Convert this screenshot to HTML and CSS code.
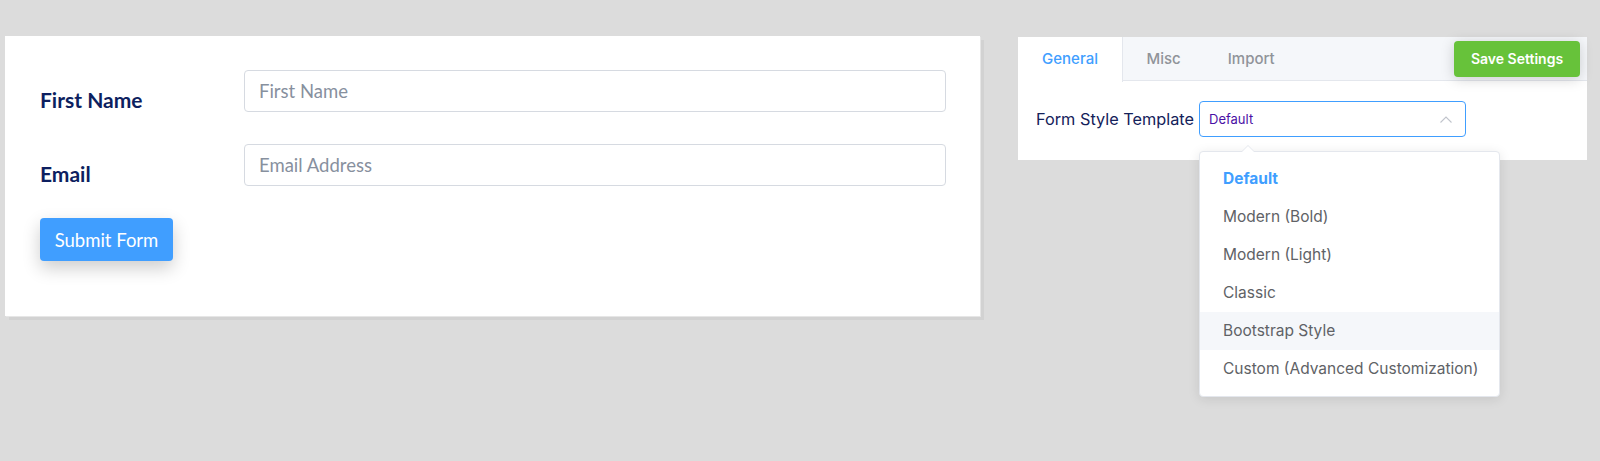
FILE: index.html
```html
<!DOCTYPE html>
<html lang="en">
<head>
<meta charset="utf-8">
<title>Form Settings</title>
<link rel="stylesheet" href="styles.css">
</head>
<body>
<div class="page">
  <section class="form-card">
    <div class="form-row">
      <label class="field-label">First Name</label>
      <input class="field-input" type="text" placeholder="First Name">
    </div>
    <div class="form-row">
      <label class="field-label">Email</label>
      <input class="field-input" type="text" placeholder="Email Address">
    </div>
    <button class="submit-btn" type="button">Submit Form</button>
  </section>

  <section class="settings">
    <div class="tabs">
      <div class="tab tab-active">General</div>
      <div class="tab">Misc</div>
      <div class="tab">Import</div>
      <button class="save-btn" type="button">Save Settings</button>
    </div>
    <div class="settings-body">
      <span class="setting-label">Form Style Template</span>
      <div class="select-wrap">
        <div class="select">
          <span class="select-value">Default</span>
          <svg class="chevron" width="12" height="7" viewBox="0 0 12 7"><path d="M0.5 6.5 L6 1 L11.5 6.5" fill="none" stroke="#c0c4cc" stroke-width="1.1"/></svg>
        </div>
        <ul class="dropdown">
          <li class="option option-selected">Default</li>
          <li class="option">Modern (Bold)</li>
          <li class="option">Modern (Light)</li>
          <li class="option">Classic</li>
          <li class="option option-hover">Bootstrap Style</li>
          <li class="option">Custom (Advanced Customization)</li>
        </ul>
      </div>
    </div>
  </section>
</div>
</body>
</html>
```

FILE: styles.css
```css
* { box-sizing: border-box; }

html, body {
  height: 100%;
}

body {
  margin: 0;
  min-height: 461px;
  background: #dcdcdc;
  font-family: "Inter", "Liberation Sans", sans-serif;
}

.page {
  display: flex;
  align-items: flex-start;
  min-height: 461px;
  padding: 36px 0 0 5px;
  gap: 38px;
}

/* ---------- left form card ---------- */
.form-card {
  width: 975px;
  height: 280px;
  background: #fff;
  box-shadow: 1px 1px 0 #e6e6e6, 4px 4px 0 #d2d2d2;
  padding: 34px 34px 0 35px;
  font-family: "Lato", "Open Sans", sans-serif;
}

.form-row {
  display: grid;
  grid-template-columns: 204px 1fr;
  align-items: start;
  margin-bottom: 31px;
}

.field-label {
  margin-top: 17px;
  font-size: 21px;
  line-height: 26px;
  font-weight: 700;
  color: #0d1f60;
}

.field-input {
  height: 42px;
  border: 1px solid #d6dae1;
  border-radius: 4px;
  padding: 0 14px;
  font-family: inherit;
  font-size: 18.5px;
  color: #333;
  outline: none;
}
.field-input::placeholder { color: #87909e; }

.submit-btn {
  width: 133px;
  height: 43px;
  border: 0;
  border-radius: 4px;
  background: #409eff;
  color: #fff;
  font-family: inherit;
  font-size: 18.5px;
  box-shadow: 0 7px 18px rgba(0, 0, 0, 0.2);
}

/* ---------- right settings panel ---------- */
.settings {
  width: 569px;
  margin-top: 1px;
  background: #fff;
}

.tabs {
  display: flex;
  align-items: center;
  height: 44px;
  background: #f5f7fa;
  border-bottom: 1px solid #e4e7ed;
  padding-right: 7px;
}

.tab {
  height: 44px;
  line-height: 44px;
  padding: 0 23.5px;
  font-size: 15px;
  font-weight: 500;
  color: #909399;
}

.tab-active {
  width: 105px;
  text-align: center;
  padding: 0;
  background: #fff;
  color: #409eff;
  border-right: 1px solid #e4e7ed;
  height: 45px;
  margin-bottom: -1px;
  align-self: flex-start;
}

.save-btn {
  margin-left: auto;
  width: 126px;
  height: 36px;
  border: 0;
  border-radius: 4px;
  background: #67c23a;
  color: #fff;
  font-family: inherit;
  font-size: 14px;
  font-weight: 600;
  box-shadow: 0 2px 14px rgba(0, 0, 0, 0.18);
}

.settings-body {
  display: flex;
  align-items: center;
  gap: 5px;
  padding: 20px 18px 23px;
}

.setting-label {
  font-size: 16.3px;
  color: #14215a;
}

.select-wrap {
  position: relative;
}

.select {
  display: flex;
  align-items: center;
  justify-content: space-between;
  width: 267px;
  height: 36px;
  border: 1px solid #409eff;
  border-radius: 4px;
  padding: 0 13px 0 9px;
}

.select-value {
  font-size: 13px;
  color: #4a10a5;
}

.chevron { display: block; }

.dropdown {
  position: absolute;
  top: 50px;
  left: 0;
  width: 301px;
  margin: 0;
  padding: 8px 0;
  list-style: none;
  background: #fff;
  border: 1px solid #e4e7ed;
  border-radius: 4px;
  box-shadow: 0 2px 12px rgba(0, 0, 0, 0.1);
  z-index: 2;
}

.dropdown::before,
.dropdown::after {
  content: "";
  position: absolute;
  left: 42px;
  width: 0;
  height: 0;
  border: 6px solid transparent;
  border-top-width: 0;
}
.dropdown::before {
  top: -7px;
  border-bottom: 6px solid #e4e7ed;
}
.dropdown::after {
  top: -6px;
  border-bottom: 6px solid #fff;
}

.option {
  height: 38px;
  line-height: 38px;
  padding: 0 23px;
  font-size: 15.5px;
  color: #606266;
  white-space: nowrap;
}

.option-selected {
  color: #409eff;
  font-weight: 700;
}

.option-hover {
  background: #f5f7fa;
}
```
